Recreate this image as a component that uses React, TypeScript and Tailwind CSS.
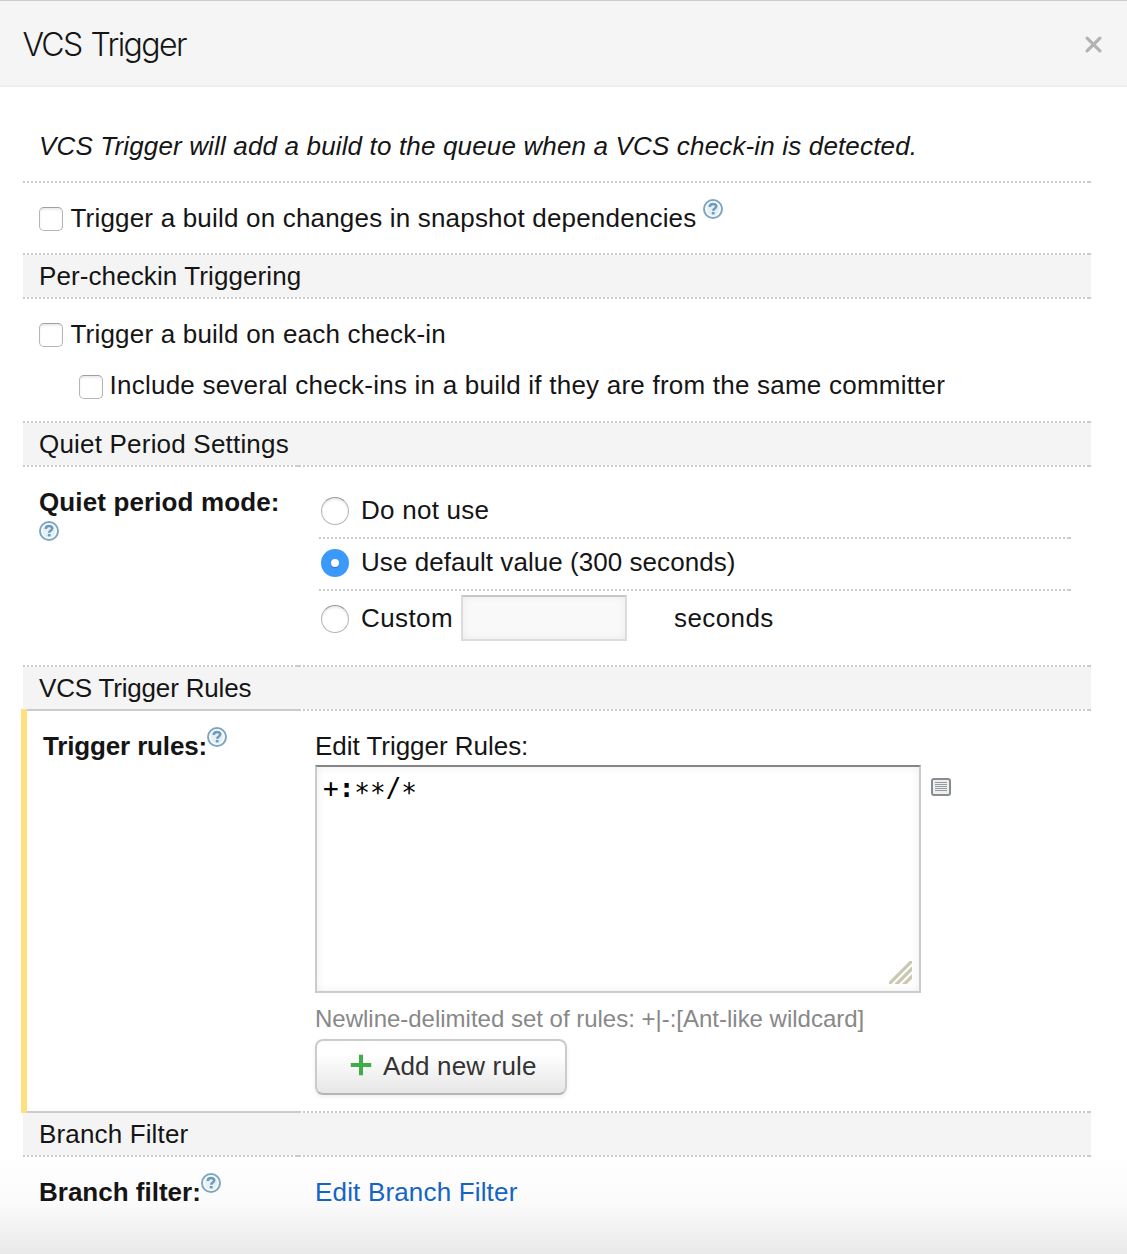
import type { ReactNode } from 'react';

const DOTS = 'bg-[repeating-linear-gradient(90deg,#cbcbcb_0_2px,transparent_2px_4px)]';

function Dotted({ className = '' }: { className?: string }) {
  return <div className={`h-[2px] ${DOTS} ${className}`} />;
}

/** Full-width dotted separator, closed by a short solid end. */
function Line({ className = '' }: { className?: string }) {
  return (
    <div className={`flex h-[2px] ${className}`}>
      <Dotted className="flex-1" />
      <div className="w-1 bg-[#cbcbcb]" />
    </div>
  );
}

/** Table-style separator whose left cell can be solid. */
function SplitLine({ solid = false }: { solid?: boolean }) {
  return (
    <div className="flex h-[2px]">
      {solid ? (
        <div className="ml-1 w-[274px] bg-[#cbcbcb]" />
      ) : (
        <>
          <Dotted className="w-[272px]" />
          <div className="w-1.5 bg-[#cbcbcb]" />
        </>
      )}
      <Line className="ml-0.5 flex-1" />
    </div>
  );
}

function HelpIcon({ className = '' }: { className?: string }) {
  return (
    <svg viewBox="0 0 20 20" className={`size-5 shrink-0 ${className}`} fill="none">
      <circle cx="10" cy="10" r="9" fill="#fff" stroke="#7ba7c1" strokeWidth="2" />
      <circle cx="10" cy="10" r="6.6" fill="#e6eff4" />
      <path d="M6.8 8C6.8 5.8 8.1 5.1 10 5.1s3.2.9 3.2 2.5c0 2-3 1.9-3 4.2" stroke="#6b9dbb" strokeWidth="2.5" />
      <rect x="8.8" y="13" width="2.8" height="2.4" fill="#6b9dbb" />
    </svg>
  );
}

function Section({ children, className = '' }: { children: ReactNode; className?: string }) {
  return <h2 className={`h-[42px] bg-[#f4f4f4] pl-4 pt-1.5 ${className}`}>{children}</h2>;
}

function Checkbox() {
  return (
    <input
      type="checkbox"
      className="mt-1 size-6 shrink-0 appearance-none rounded-[5px] border border-[#b5b5b5] border-t-[#a0a0a0] bg-white shadow-[inset_0_2px_2px_#ececec]"
    />
  );
}

function Radio({ checked = false }: { checked?: boolean }) {
  return (
    <span
      role="radio"
      aria-checked={checked}
      className={
        checked
          ? 'mt-0.5 flex size-7 shrink-0 items-center justify-center rounded-full bg-[#3b99fc]'
          : 'mt-0.5 flex size-7 shrink-0 rounded-full border border-[#b5b5b5] border-t-[#999] bg-white shadow-[inset_0_2px_2px_#ececec]'
      }
    >
      {checked && <span className="size-2 rounded-full bg-white shadow-[0_1px_1px_#2b78d0]" />}
    </span>
  );
}

export default function App() {
  return (
    <div className="flex h-[1254px] w-[1127px] flex-col bg-[linear-gradient(#fff_0,#fff_1150px,#fafafa_1205px,#e9e9e9_1254px)] font-['Liberation_Sans',Arial,sans-serif] text-[26px] leading-[30px] text-[#151515]">
      <header className="flex h-[87px] shrink-0 items-center justify-between border-t border-b-2 border-t-[#cbcbcb] border-b-[#eeeeee] bg-[#f5f5f5] pl-[22.5px] pr-[25px]">
        <h1 className="pt-[3px] font-[Inter] text-[32px] font-light leading-[38px] tracking-[-1.6px] [word-spacing:1.5px]">VCS Trigger</h1>
        <svg viewBox="0 0 17 17" className="mt-0.5 size-[17px]" stroke="#b3b3b3" strokeWidth="3.2" strokeLinecap="round">
          <path d="M2.1 2.1l12.8 12.8M14.9 2.1L2.1 14.9" />
        </svg>
      </header>

      <main className="flex flex-col pl-[23px] pr-9">
        <p className="mb-5 mt-11 pl-4 italic tracking-[0.155px]">
          VCS Trigger will add a build to the queue when a VCS check-in is detected.
        </p>
        <Line />
        <div className="flex h-[70px] pl-4 pt-5">
          <Checkbox />
          <span className="ml-[7.5px] tracking-[0.19px]">Trigger a build on changes in snapshot dependencies</span>
          <HelpIcon className="-mt-1 ml-[7px]" />
        </div>
        <Line />
        <Section className="tracking-[0.1px]">Per-checkin Triggering</Section>
        <Line />
        <div className="flex h-[122px] flex-col gap-[21px] pl-4 pt-5">
          <div className="flex">
            <Checkbox />
            <span className="ml-[7.5px] tracking-[0.2px]">Trigger a build on each check-in</span>
          </div>
          <div className="flex pl-10">
            <div className="pt-px">
              <Checkbox />
            </div>
            <span className="ml-[6.6px] tracking-[0.225px]">
              Include several check-ins in a build if they are from the same committer
            </span>
          </div>
        </div>
        <Line />
        <Section className="tracking-[0.2px]">Quiet Period Settings</Section>
        <SplitLine />
        <div className="flex h-[198px]">
          <div className="w-[296px] pl-4 pt-5">
            <div className="font-bold tracking-[0.12px]">Quiet period mode:</div>
            <HelpIcon className="mt-1" />
          </div>
          <div className="w-[752px] pt-7">
            <div className="flex h-[42px] pl-0.5">
              <Radio />
              <span className="ml-3 tracking-[0.25px]">Do not use</span>
            </div>
            <Line />
            <div className="flex h-[50px] pl-0.5 pt-2">
              <Radio checked />
              <span className="ml-3 tracking-[0.05px]">Use default value (300 seconds)</span>
            </div>
            <Line />
            <div className="flex pl-0.5 pt-1">
              <div className="flex pt-2">
                <Radio />
                <span className="ml-3 w-[99.5px] tracking-[0.4px]">Custom</span>
              </div>
              <input
                type="text"
                className="h-[46px] w-[166px] border-2 border-[#dcdcdc] border-t-[#c6c6c6] bg-[#f9f9f9] shadow-[inset_0_0_7px_#e9e9e9]"
              />
              <span className="ml-[47.5px] pt-2 tracking-[0.4px]">seconds</span>
            </div>
          </div>
        </div>
        <SplitLine />
        <Section className="tracking-[-0.18px]">VCS Trigger Rules</Section>
        <div className="-ml-0.5 bg-[linear-gradient(#ffe07f,#ffe07f)] bg-[length:6px_100%] bg-no-repeat">
          <div className="pl-0.5">
            <SplitLine solid />
            <div className="flex h-[400px]">
              <div className="flex w-[292px] pl-[20px] pt-5">
                <span className="h-[30px] font-bold tracking-[-0.15px]">Trigger rules:</span>
                <HelpIcon className="-mt-1" />
              </div>
              <div className="flex flex-col items-start pt-5">
                <div className="tracking-[-0.03px]">Edit Trigger Rules:</div>
                <div className="mt-1 flex">
                  <div className="relative h-[228px] w-[606px] border-2 border-[#cbcbcb] border-t-[#858585] bg-white pl-1.5 pt-1.5 font-['DejaVu_Sans_Mono',monospace] text-black shadow-[inset_0_0_10px_#eeeeee]">
                    +<span className="font-bold">:</span>
                    <span className="inline-block translate-y-[5px]">**</span>/<span className="inline-block translate-y-[5px]">*</span>
                    <svg viewBox="0 0 24 24" className="absolute bottom-[7px] right-[7px] size-[23px] overflow-hidden" stroke="#c9c9b2" strokeWidth="3.4">
                      <path d="M-1 25L25 -1M7 25L25 7M15 25L25 15" />
                    </svg>
                  </div>
                  <svg viewBox="0 0 20 18" className="ml-2.5 mt-[13px] h-[18px] w-5">
                    <rect x="1" y="1" width="18" height="16" rx="2" fill="#eaf0f4" stroke="#8c8c8c" strokeWidth="2" />
                    <path d="M4 4.5h12M4 6.5h12M4 8.5h12M4 10.5h12M4 12.5h12" stroke="#999" />
                  </svg>
                </div>
                <div className="mt-[11px] text-[24px] tracking-[-0.01px] text-[#888]">
                  Newline-delimited set of rules: +|-:[Ant-like wildcard]
                </div>
                <button className="mt-[5px] flex h-14 w-[252px] items-center rounded-lg border-2 border-[#cbcbcb] border-b-[#b5b5b5] bg-[linear-gradient(#fff_0%,#fff_25%,#e6e6e6_100%)] pb-0.5 pl-[33px] tracking-[0.15px] text-[#333] shadow-[0_2px_4px_#eeeeee]">
                  <svg viewBox="0 0 22 22" className="-mt-0.5 mr-[11px] size-[22px]" stroke="#3fae49" strokeWidth="4">
                    <path d="M11 .8v20.4M.8 11h20.4" />
                  </svg>
                  Add new rule
                </button>
              </div>
            </div>
            <SplitLine solid />
          </div>
        </div>
        <Section className="tracking-[0.15px]">Branch Filter</Section>
        <SplitLine />
        <div className="flex pt-5">
          <div className="flex w-[292px] pl-4">
            <span className="font-bold">Branch filter:</span>
            <HelpIcon className="-mt-1" />
          </div>
          <a href="#" className="tracking-[0.17px] text-[#1564c4]">
            Edit Branch Filter
          </a>
        </div>
      </main>
    </div>
  );
}
